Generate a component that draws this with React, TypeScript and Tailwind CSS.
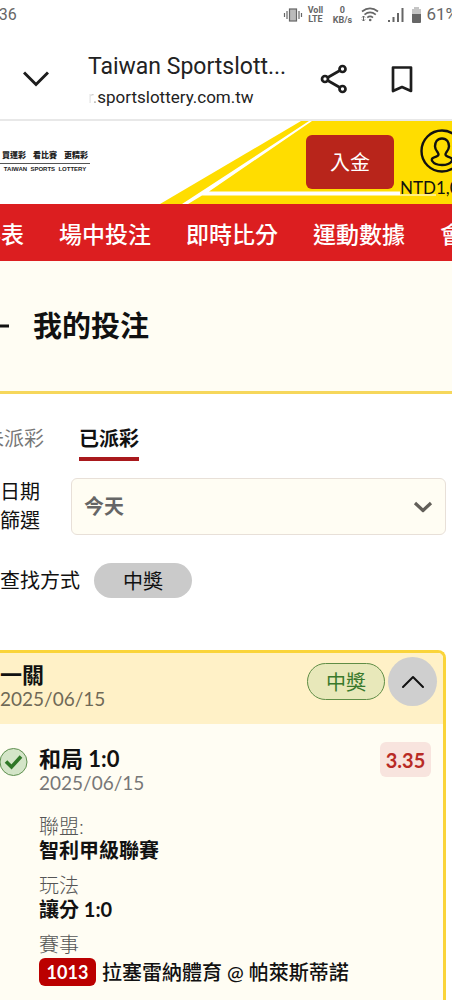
import type { ReactNode } from 'react';

const navItems = ['賽事表', '場中投注', '即時比分', '運動數據', '會員中心'];

function StatusBar() {
  return (
    <div className="flex h-[30px] items-center justify-between overflow-hidden font-['Roboto',sans-serif] text-[#666]">
      <span className="-ml-[23px] shrink-0 text-base">19:36</span>
      <div className="-mr-[6px] flex shrink-0 items-center">
        <svg width="20" height="16" viewBox="0 0 20 16" fill="none" stroke="#666" strokeWidth="1.2" aria-hidden="true">
          <rect x="6.5" y="2" width="7" height="12" fill="#bbb" />
          <path d="M4 4v8M16 4v8M1.5 6v4M18.5 6v4" />
        </svg>
        <span className="ml-1 w-4 text-center text-[9px] leading-[9px] font-bold">
          Voll
          <br />
          LTE
        </span>
        <span className="ml-2 w-[22px] text-center text-[9px] leading-[10px] font-bold">
          0
          <br />
          KB/s
        </span>
        <svg className="ml-2" width="18" height="16" viewBox="0 0 18 16" fill="none" stroke="#666" strokeWidth="1.7" aria-hidden="true">
          <path d="M1 4.5Q9-1.8 17 4.5M3.5 7.7Q9 3.2 14.8 7.7M6.3 10.6Q9 8.3 12 10.6" />
          <circle cx="9.2" cy="13" r="1.3" fill="#666" stroke="none" />
          <path d="M1 10.5 2.5 9 4 10.5M2.5 9v5M1 12.5 2.5 14 4 12.5" strokeWidth="1" />
        </svg>
        <svg className="ml-2" width="18" height="16" viewBox="0 0 18 16" fill="#666" aria-hidden="true">
          <path d="M1 13h2v2H1zM5.5 10h2v5h-2zM10 6h2v9h-2zM14.5 1h2v14h-2z" />
        </svg>
        <svg className="ml-[6px]" width="11" height="18" viewBox="0 0 11 18" aria-hidden="true">
          <path d="M3 1h5v2h2v5H1V3h2z" fill="#c5c5c5" />
          <path d="M1 8h9v8q0 1-1 1H2q-1 0-1-1z" fill="#666" />
        </svg>
        <span className="ml-1 text-[17px]">61%</span>
      </div>
    </div>
  );
}

function BrowserBar() {
  return (
    <div className="flex h-[91px] items-center border-b-2 border-[#e8e8e8] pt-2 font-['Roboto',sans-serif] text-[#222]">
      <button type="button" aria-label="Close" className="ml-6 flex size-6 items-center justify-center">
        <svg width="26" height="16" viewBox="0 0 26 16" fill="none" stroke="#1d1d1d" strokeWidth="3" className="shrink-0" aria-hidden="true">
          <path d="M1 1.5 13 13.5 25 1.5" />
        </svg>
      </button>
      <div className="ml-10 min-w-0 flex-1 pt-1">
        <p className="text-[23px] leading-8 whitespace-nowrap">Taiwan Sportslott...</p>
        <p className="text-[17px] leading-7">
          <span className="bg-linear-to-r from-white to-[#999] bg-clip-text text-transparent">r.</span>sportslottery.com.tw
        </p>
      </div>
      <button type="button" aria-label="Share" className="shrink-0">
        <svg width="28" height="30" viewBox="0 0 28 30" fill="none" stroke="#1d1d1d" strokeWidth="2.7" aria-hidden="true">
          <circle cx="5" cy="15" r="3" />
          <circle cx="22.5" cy="5" r="3" />
          <circle cx="22.5" cy="25" r="3" />
          <path d="M7.7 13.5 19.9 6.5M7.7 16.5 19.9 23.5" />
        </svg>
      </button>
      <button type="button" aria-label="Bookmark" className="mr-[38px] ml-[42px] shrink-0">
        <svg width="24" height="28" viewBox="0 0 24 28" fill="none" stroke="#1d1d1d" strokeWidth="2.7" aria-hidden="true">
          <path d="M3 2.5h18v23.5l-9-4-9 4z" strokeLinejoin="round" />
        </svg>
      </button>
    </div>
  );
}

function SiteHeader() {
  return (
    <header className="relative flex h-[83px] justify-between overflow-hidden">
      <svg className="absolute top-0 right-0" width="292" height="83" viewBox="0 0 292 83" aria-hidden="true">
        <path d="M0 83 141 0H292V83z" fill="#ffdd00" />
        <path d="M22 83H28L42 74.5H240V70.5H49L152 0H149z" fill="#fff" />
        <path d="M240 74H276" stroke="#fff" strokeWidth="1" />
      </svg>
      <div className="relative mt-[26px] flex w-[90px] shrink-0 flex-col text-center text-[#222]">
        <p className="flex justify-between border-b border-[#555] pr-[2px] pl-[2px] text-[8px] leading-[16px] font-black">
          <span>買運彩</span>
          <span>看比賽</span>
          <span>更精彩</span>
        </p>
        <p className="text-[6px] leading-[10px] font-bold whitespace-nowrap font-['Liberation_Sans',sans-serif]">TAIWAN&nbsp; SPORTS&nbsp; LOTTERY</p>
      </div>
      <div className="relative flex shrink-0 items-start">
        <button type="button" className="mt-[14px] h-[54px] w-[88px] rounded-md bg-[#b8251b] text-[20px] text-white">
          入金
        </button>
        <div className="-mr-[35px] ml-[3px] flex w-[90px] flex-col items-center pt-2">
          <svg width="44" height="44" viewBox="0 0 44 44" fill="none" stroke="#111" strokeWidth="2.4" aria-hidden="true">
            <circle cx="22" cy="22" r="20.5" />
            <path d="M22 9.5c-5 0-7 4-7 7.8 0 3 1.5 4.6 2.8 6.3 1.3 1.8.7 3.2-1.6 4-3 1-5.2 1.8-4 4.4C14 35 18 36 22 36s8-1 9.8-4c1.2-2.6-1-3.4-4-4.4-2.3-.8-2.9-2.2-1.6-4 1.3-1.7 2.8-3.3 2.8-6.3 0-3.8-2-7.8-7-7.8z" />
          </svg>
          <span className="self-start pl-[3px] text-[17px] leading-[30px] text-[#111]">NTD1,035</span>
        </div>
      </div>
    </header>
  );
}

function Detail({ label, children }: { label: string; children: ReactNode }) {
  return (
    <div>
      <dt className="text-[20px] leading-6 font-light text-[#555]">{label}</dt>
      <dd className="text-[20px] leading-6 font-bold text-[#111]">{children}</dd>
    </div>
  );
}

function BetCard() {
  return (
    <section className="mt-[52px] mr-[6px] flex-1 rounded-tr-lg border-t-[3px] border-r-[3px] border-[#fad43a] bg-[#fffdf3]">
      <div className="flex h-[71px] items-start justify-between rounded-tr-[5px] bg-[#fff1c7]">
        <div className="pt-[10px]">
          <h2 className="text-[22px] leading-6 font-bold">一關</h2>
          <time className="block text-[19px] leading-6 text-[#6f6957]">2025/06/15</time>
        </div>
        <div className="flex items-center gap-[3px] pt-1 pr-[6px]">
          <span className="flex h-[37px] w-[78px] items-center justify-center rounded-full border border-[#5f8d45] bg-[#e8e8ba] text-[20px] text-[#39792c]">中獎</span>
          <button type="button" aria-label="收合" className="flex size-[49px] items-center justify-center rounded-full bg-[#cfcfcf]">
            <svg width="24" height="14" viewBox="0 0 24 14" fill="none" stroke="#111" strokeWidth="2" strokeLinecap="round" strokeLinejoin="round" aria-hidden="true">
              <path d="M2 12 12 2 22 12" />
            </svg>
          </button>
        </div>
      </div>
      <div className="flex items-start pt-[18px] pr-3 pb-3">
        <svg className="mt-[5px] mr-[11px] shrink-0" width="28" height="30" viewBox="0 0 28 30" aria-hidden="true">
          <circle cx="13.5" cy="15" r="13.5" fill="#d4e5c8" stroke="#5f9050" />
          <path d="M6 14.5 11.5 20 21 9.5" fill="none" stroke="#2f7727" strokeWidth="3.6" />
        </svg>
        <div className="min-w-0 flex-1">
          <h3 className="pt-[3px] text-[22px] leading-7 font-bold">和局 1:0</h3>
          <time className="block text-[19px] leading-5 text-[#777]">2025/06/15</time>
          <dl className="mt-[21px] flex flex-col gap-[11px]">
            <Detail label="聯盟:">智利甲級聯賽</Detail>
            <Detail label="玩法">讓分 1:0</Detail>
            <Detail label="賽事">
              <span className="flex items-center gap-[6px] pt-[2px] whitespace-nowrap">
                <span className="flex h-7 w-[57px] items-center justify-center rounded-md bg-[#bb0000] text-[18px] text-white">1013</span>
                <span className="leading-7 font-medium">拉塞雷納體育 @ 帕萊斯蒂諾</span>
              </span>
            </Detail>
          </dl>
        </div>
        <span className="flex h-[35px] w-[51px] shrink-0 items-center justify-center rounded-md bg-[#f8e4de] text-[20px] font-bold text-[#b82b25]">3.35</span>
      </div>
    </section>
  );
}

export default function App() {
  return (
    <div className="flex min-h-screen flex-col overflow-hidden bg-white font-['Lato','Noto_Sans_CJK_TC',sans-serif] text-[#111]">
      <StatusBar />
      <BrowserBar />
      <SiteHeader />
      <nav className="h-[57px] overflow-hidden bg-[#dc1e20]">
        <div className="-ml-[45px] flex gap-[35px] text-[23px] leading-[60px] font-medium whitespace-nowrap text-white">
          {navItems.map((item) => (
            <a key={item} href="#" className="shrink-0">
              {item}
            </a>
          ))}
        </div>
      </nav>
      <div className="flex h-[133px] items-center border-b-[3px] border-[#f6d75b] bg-[#fffdf3]">
        <button type="button" aria-label="返回" className="-ml-[15px] shrink-0">
          <svg width="24" height="20" viewBox="0 0 24 20" fill="none" stroke="#111" strokeWidth="3" aria-hidden="true">
            <path d="M24 10H2M10 2 2 10l8 8" />
          </svg>
        </button>
        <h1 className="ml-6 text-[29px] leading-10 font-bold">我的投注</h1>
      </div>
      <main className="flex flex-1 flex-col">
        <div role="tablist" className="-ml-[16px] flex gap-[35px] pt-[26px] text-[20px] leading-[37px]">
          <button type="button" role="tab" aria-selected="false" className="border-b-4 border-transparent text-[#777]">
            未派彩
          </button>
          <button type="button" role="tab" aria-selected="true" className="border-b-4 border-[#a9191d] font-bold">
            已派彩
          </button>
        </div>
        <div className="mt-4 flex items-center pr-[6px]">
          <label htmlFor="date" className="w-[71px] shrink-0 pr-7 text-[20px] leading-[29px]">
            日期篩選
          </label>
          <div className="relative min-w-0 flex-1">
            <select id="date" defaultValue="today" className="block h-[57px] w-full appearance-none rounded-md border border-[#e8e0d8] bg-[#fffdf3] px-3 text-[20px] font-bold text-[#666]">
              <option value="today">今天</option>
              <option value="yesterday">昨天</option>
            </select>
            <svg className="pointer-events-none absolute top-[23px] right-[13px]" width="20" height="13" viewBox="0 0 20 13" fill="none" stroke="#625f59" strokeWidth="3.2" aria-hidden="true">
              <path d="M2 2 10 9.5 18 2" strokeLinejoin="round" />
            </svg>
          </div>
        </div>
        <div className="mt-[28px] flex items-center gap-[14px]">
          <span className="text-[20px] leading-[35px]">查找方式</span>
          <button type="button" className="h-[35px] w-[98px] rounded-full bg-[#cacaca] text-[20px]">
            中獎
          </button>
        </div>
        <BetCard />
      </main>
    </div>
  );
}
